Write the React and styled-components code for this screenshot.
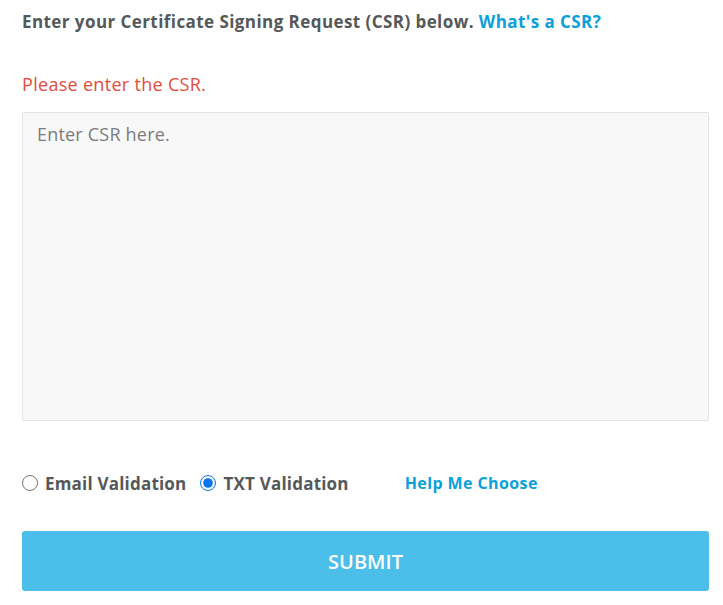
import React, { useState } from "react";
import styled, { createGlobalStyle } from "styled-components";

const GlobalStyle = createGlobalStyle`
  body {
    margin: 0;
    background: #fff;
    font-family: "Open Sans", Lato, sans-serif;
  }
`;

const Page = styled.div`
  width: 687px;
  padding: 10px 0 0 22px;
`;

const Intro = styled.p`
  margin: 0;
  font-size: 17px;
  line-height: 24px;
  font-weight: 700;
  letter-spacing: 0.43px;
  color: #555859;
`;

const Link = styled.a`
  color: #0b9fdb;
  font-weight: 700;
  text-decoration: none;
  cursor: pointer;
`;

const Error = styled.p`
  margin: 38px 0 0;
  font-size: 18px;
  line-height: 24px;
  letter-spacing: 0.3px;
  color: #e54c3c;
`;

const CsrInput = styled.textarea`
  display: block;
  box-sizing: border-box;
  width: 100%;
  height: 309px;
  margin-top: 16px;
  padding: 10px 14px;
  border: 1px solid #dfe3ea;
  border-radius: 2px;
  background: #f8f8f9;
  font-family: "Open Sans", Lato, sans-serif;
  font-size: 18px;
  line-height: 22px;
  letter-spacing: 0.2px;
  color: #444;
  resize: none;
  outline: none;

  &::placeholder {
    color: #7a7c7e;
  }
`;

const Options = styled.div`
  display: flex;
  align-items: center;
  margin-top: 50px;
  height: 24px;
`;

const Choice = styled.label`
  display: flex;
  align-items: center;
  gap: 7px;
  margin-right: ${(p) => p.$gap || 14}px;
  font-size: 17px;
  font-weight: 700;
  letter-spacing: 0.2px;
  color: #555859;
  cursor: pointer;
`;

const Radio = styled.input`
  margin: 0;
  width: 16px;
  height: 16px;
  accent-color: #0a75f0;
`;

const HelpLink = styled(Link)`
  font-size: 16px;
  letter-spacing: 0.4px;
`;

const Submit = styled.button`
  display: block;
  width: 100%;
  height: 60px;
  margin-top: 36px;
  border: none;
  border-radius: 3px;
  background: #4bbeea;
  color: #fff;
  font-family: "Open Sans", Lato, sans-serif;
  font-size: 20px;
  font-weight: 600;
  cursor: pointer;
`;

export default function App() {
  const [method, setMethod] = useState("txt");

  return (
    <Page>
      <GlobalStyle />
      <Intro>
        Enter your Certificate Signing Request (CSR) below.{" "}
        <Link>What's a CSR?</Link>
      </Intro>
      <Error>Please enter the CSR.</Error>
      <CsrInput placeholder="Enter CSR here." />
      <Options>
        <Choice>
          <Radio
            type="radio"
            name="validation"
            checked={method === "email"}
            onChange={() => setMethod("email")}
          />
          Email Validation
        </Choice>
        <Choice $gap={56}>
          <Radio
            type="radio"
            name="validation"
            checked={method === "txt"}
            onChange={() => setMethod("txt")}
          />
          TXT Validation
        </Choice>
        <HelpLink>Help Me Choose</HelpLink>
      </Options>
      <Submit>SUBMIT</Submit>
    </Page>
  );
}
